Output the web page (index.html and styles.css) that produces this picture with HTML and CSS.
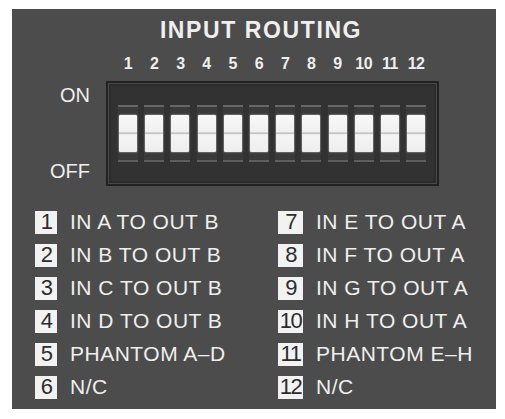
FILE: index.html
```html
<!DOCTYPE html>
<html lang="en">
<head>
  <meta charset="UTF-8" />
  <title>Input Routing</title>
  <link rel="stylesheet" href="styles.css">
</head>
<body>
  <div class="panel">
    <h1 class="title">INPUT ROUTING</h1>

    <div class="routing">
      <div class="numbers">
        <span>1</span><span>2</span><span>3</span><span>4</span><span>5</span><span>6</span>
        <span>7</span><span>8</span><span>9</span><span>10</span><span>11</span><span>12</span>
      </div>
      <div class="states">
        <span>ON</span>
        <span>OFF</span>
      </div>
      <div class="dip">
        <div class="slot"><div class="lever"></div></div>
        <div class="slot"><div class="lever"></div></div>
        <div class="slot"><div class="lever"></div></div>
        <div class="slot"><div class="lever"></div></div>
        <div class="slot"><div class="lever"></div></div>
        <div class="slot"><div class="lever"></div></div>
        <div class="slot"><div class="lever"></div></div>
        <div class="slot"><div class="lever"></div></div>
        <div class="slot"><div class="lever"></div></div>
        <div class="slot"><div class="lever"></div></div>
        <div class="slot"><div class="lever"></div></div>
        <div class="slot"><div class="lever"></div></div>
      </div>
    </div>

    <div class="legend">
      <div class="item"><span class="num">1</span>IN A TO OUT B</div>
      <div class="item"><span class="num">2</span>IN B TO OUT B</div>
      <div class="item"><span class="num">3</span>IN C TO OUT B</div>
      <div class="item"><span class="num">4</span>IN D TO OUT B</div>
      <div class="item"><span class="num">5</span>PHANTOM A&#8211;D</div>
      <div class="item"><span class="num">6</span>N/C</div>
      <div class="item"><span class="num">7</span>IN E TO OUT A</div>
      <div class="item"><span class="num">8</span>IN F TO OUT A</div>
      <div class="item"><span class="num">9</span>IN G TO OUT A</div>
      <div class="item"><span class="num">10</span>IN H TO OUT A</div>
      <div class="item"><span class="num">11</span>PHANTOM E&#8211;H</div>
      <div class="item"><span class="num">12</span>N/C</div>
    </div>
  </div>
</body>
</html>
```

FILE: styles.css
```css
body {
  margin: 0;
  background: #ffffff;
  font-family: "Liberation Sans", Arial, Helvetica, sans-serif;
}
.panel {
  margin: 9px 0 0 12px;
  width: 484px;
  height: 400px;
  box-sizing: border-box;
  padding-top: 8px;
  background: #4c4c4c;
  color: #efefef;
}
.title {
  margin: 0;
  padding-left: 14px;
  text-align: center;
  font-size: 23px;
  line-height: 27px;
  font-weight: bold;
  letter-spacing: 1.6px;
}
.routing {
  display: grid;
  grid-template-columns: 94px 333px;
  row-gap: 8px;
  margin-top: 11px;
}
.numbers {
  grid-column: 2;
  display: grid;
  grid-template-columns: repeat(12, 20px);
  column-gap: 6.2px;
  padding-left: 12px;
  font-size: 16px;
  line-height: 18px;
  font-weight: bold;
  text-align: center;
}
.numbers span {
  white-space: nowrap;
  display: flex;
  justify-content: center;
  letter-spacing: -0.5px;
}
.states {
  grid-column: 1;
  display: flex;
  flex-direction: column;
  justify-content: space-between;
  align-items: flex-end;
  padding: 3px 16px 4px 0;
  font-size: 20px;
  line-height: 22px;
}
.dip {
  grid-column: 2;
  height: 105px;
  box-sizing: border-box;
  display: flex;
  align-items: center;
  gap: 6.2px;
  padding-left: 10px;
  background: #323232;
  border: 2px solid #222222;
  box-shadow: inset 0 0 0 1px #484848, inset 0 0 0 3px #2c2c2c;
}
.slot {
  width: 20px;
  height: 57px;
  box-sizing: border-box;
  display: flex;
  flex-direction: column;
  align-items: center;
  padding-top: 8px;
  background: #3a3a3a;
  border-top: 2px solid #666666;
  border-bottom: 2px solid #5e5e5e;
}
.lever {
  width: 18px;
  height: 37px;
  border-radius: 1px;
  background: linear-gradient(#f8f8f8 0%, #f0f0f0 46%, #c4c4c4 48%, #c4c4c4 51%, #f4f4f4 53%, #eeeeee 100%);
  box-shadow: 0 0 2px #d0d0d0;
}
.legend {
  display: grid;
  grid-template-columns: 243px 1fr;
  grid-template-rows: repeat(6, 22px);
  grid-auto-flow: column;
  row-gap: 11px;
  margin-top: 25px;
  padding-left: 23px;
  font-size: 21px;
  line-height: 22px;
  letter-spacing: 0.5px;
}
.item {
  display: flex;
  align-items: center;
  gap: 13px;
  white-space: nowrap;
}
.num {
  width: 22px;
  height: 23px;
  flex-shrink: 0;
  display: flex;
  align-items: center;
  justify-content: center;
  background: #f2f2f2;
  color: #2c2c2c;
  font-size: 22px;
  letter-spacing: -1.5px;
}
.item:nth-child(n+7) .num {
  width: 25px;
}
```
